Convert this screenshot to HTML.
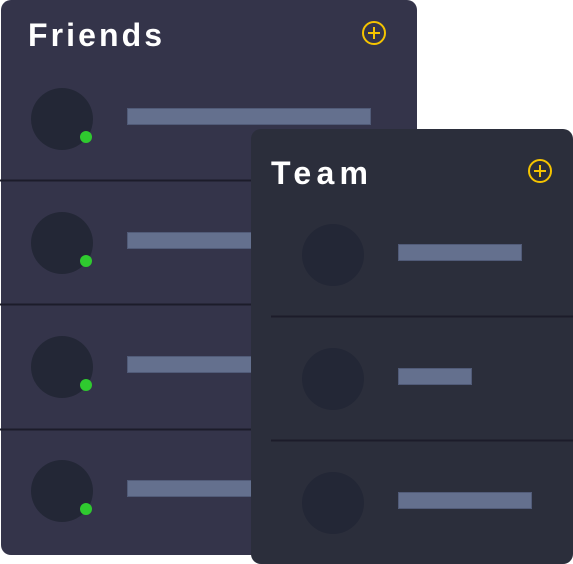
<!DOCTYPE html>
<html><head><meta charset="utf-8"><style>
html,body{margin:0;padding:0;background:#fff;width:573px;height:564px;overflow:hidden}
svg{display:block}
text{font-family:"Liberation Sans",sans-serif;font-weight:bold;fill:#fff}
</style></head><body>
<svg width="573" height="564" viewBox="0 0 573 564" xmlns="http://www.w3.org/2000/svg">
<rect x="1" y="0" width="416" height="555" rx="10" fill="#34344a"/>
<text x="28" y="46" font-size="32" textLength="134" lengthAdjust="spacing">Friends</text>
<circle cx="374" cy="33" r="11" fill="none" stroke="#f5c400" stroke-width="2"/>
<path d="M374 27v12M368 33h12" stroke="#f5c400" stroke-width="2"/>
<g>
<line x1="0" y1="180.5" x2="417" y2="180.5" stroke="#1c1c2a" stroke-width="2"/>
<line x1="0" y1="304.5" x2="417" y2="304.5" stroke="#1c1c2a" stroke-width="2"/>
<line x1="0" y1="429.5" x2="417" y2="429.5" stroke="#1c1c2a" stroke-width="2"/>
</g>
<g fill="#232736">
<circle cx="62" cy="119" r="31"/><circle cx="62" cy="243" r="31"/><circle cx="62" cy="367" r="31"/><circle cx="62" cy="491" r="31"/>
</g>
<g fill="#2fca2f">
<circle cx="86" cy="137" r="6"/><circle cx="86" cy="261" r="6"/><circle cx="86" cy="385" r="6"/><circle cx="86" cy="509" r="6"/>
</g>
<g fill="#64708e" stroke="#515b78" stroke-width="1">
<rect x="127.5" y="108.5" width="243" height="16"/>
<rect x="127.5" y="232.5" width="243" height="16"/>
<rect x="127.5" y="356.5" width="243" height="16"/>
<rect x="127.5" y="480.5" width="243" height="16"/>
</g>
<rect x="251" y="129" width="322" height="435" rx="10" fill="#2b2e3b"/>
<text x="271" y="184" font-size="32" textLength="97" lengthAdjust="spacing">Team</text>
<circle cx="540" cy="171" r="11" fill="none" stroke="#f5c400" stroke-width="2"/>
<path d="M540 165v12M534 171h12" stroke="#f5c400" stroke-width="2"/>
<line x1="271" y1="316.5" x2="573" y2="316.5" stroke="#1c1c2a" stroke-width="2"/>
<line x1="271" y1="440.5" x2="573" y2="440.5" stroke="#1c1c2a" stroke-width="2"/>
<g fill="#232736">
<circle cx="333" cy="255" r="31"/><circle cx="333" cy="379" r="31"/><circle cx="333" cy="503" r="31"/>
</g>
<g fill="#64708e" stroke="#515b78" stroke-width="1">
<rect x="398.5" y="244.5" width="123" height="16"/>
<rect x="398.5" y="368.5" width="73" height="16"/>
<rect x="398.5" y="492.5" width="133" height="16"/>
</g>
</svg>
</body></html>
